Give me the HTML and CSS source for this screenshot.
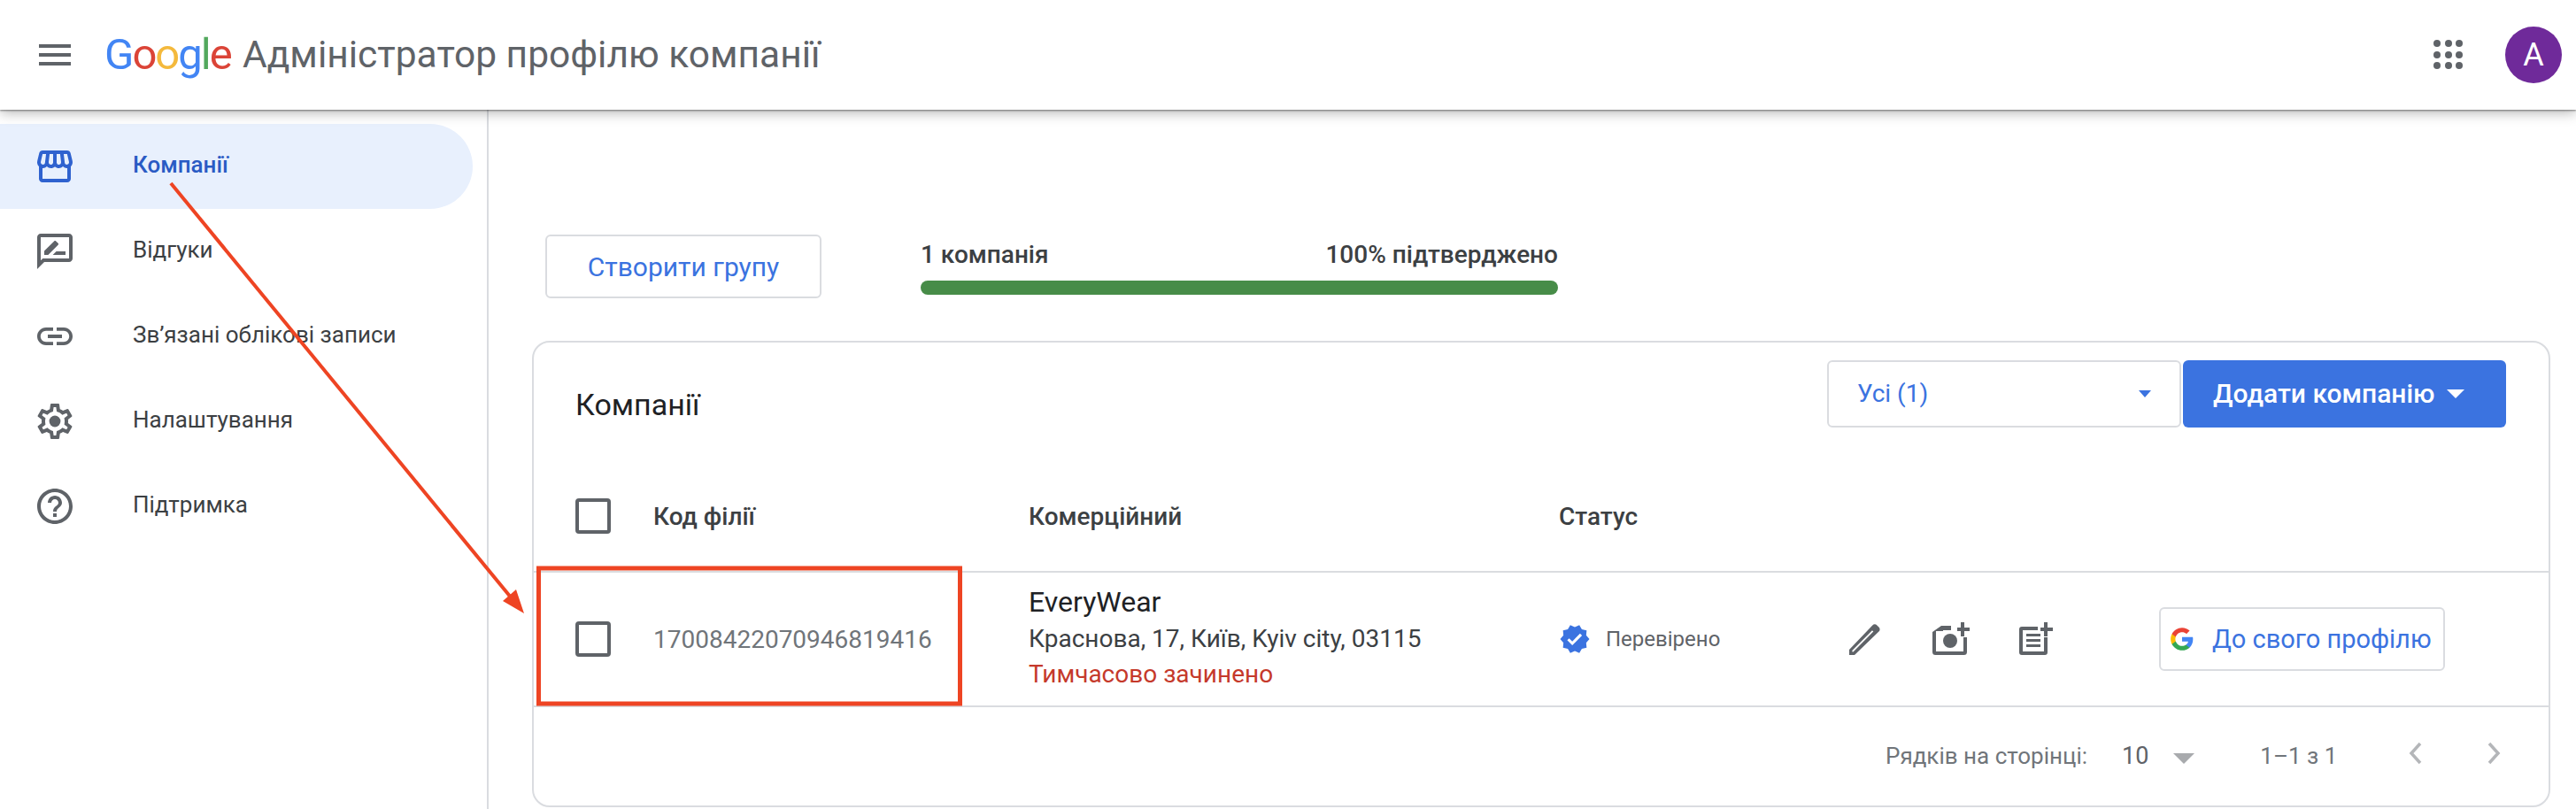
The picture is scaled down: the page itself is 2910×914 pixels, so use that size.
FILE: index.html
```html
<!DOCTYPE html>
<html lang="uk">
<head>
  <meta charset="UTF-8" />
  <title>Адміністратор профілю компанії</title>
  <link rel="stylesheet" href="styles.css">
</head>
<body>
  <header class="topbar">
    <div class="hamburger"><span></span><span></span><span></span></div>
    <div class="logo"><span class="g-blue">G</span><span class="g-red">o</span><span class="g-yellow">o</span><span class="g-blue">g</span><span class="g-green">l</span><span class="g-red">e</span></div>
    <div class="app-title">Адміністратор профілю компанії</div>
    <svg class="apps" width="38" height="38" viewBox="0 0 38 38" fill="#5f6368">
      <circle cx="6" cy="6" r="4"/><circle cx="19" cy="6" r="4"/><circle cx="31" cy="6" r="4"/>
      <circle cx="6" cy="19" r="4"/><circle cx="19" cy="19" r="4"/><circle cx="31" cy="19" r="4"/>
      <circle cx="6" cy="31" r="4"/><circle cx="19" cy="31" r="4"/><circle cx="31" cy="31" r="4"/>
    </svg>
    <div class="avatar">A</div>
  </header>

  <div class="layout">
    <nav class="sidebar">
      <a class="nav-item active">
        <svg class="nav-icon" viewBox="0 0 24 24"><path d="M21.9 8.89l-1.05-4.37c-.22-.9-1-1.52-1.91-1.52H5.05c-.9 0-1.69.63-1.9 1.52L2.1 8.89c-.24 1.02-.02 2.06.62 2.88.08.11.19.19.28.29V19c0 1.1.9 2 2 2h14c1.1 0 2-.9 2-2v-6.94c.09-.09.2-.18.28-.28.64-.82.87-1.87.62-2.89zm-2.99-3.9l1.05 4.37c.1.42.01.84-.25 1.17-.14.18-.44.47-.94.47-.61 0-1.14-.49-1.21-1.14L16.98 5l1.93-.01zM13 5h1.96l.54 4.52c.05.39-.07.78-.33 1.07-.22.26-.54.41-.95.41-.67 0-1.22-.59-1.22-1.31V5zM8.49 9.52L9.04 5H11v4.69c0 .72-.55 1.31-1.29 1.31-.34 0-.65-.15-.89-.41-.25-.29-.37-.68-.33-1.07zm-4.45-.16L5.05 5h1.97l-.58 4.86c-.08.65-.6 1.14-1.21 1.14-.49 0-.8-.29-.93-.47-.27-.32-.36-.75-.26-1.17zM5 19v-6.03c.08.01.15.03.23.03.87 0 1.66-.36 2.24-.95.6.6 1.4.95 2.31.95.87 0 1.65-.36 2.23-.93.59.57 1.39.93 2.29.93.84 0 1.64-.35 2.24-.95.58.59 1.37.95 2.24.95.08 0 .15-.02.23-.03V19H5z"/></svg>
        <span>Компанії</span>
      </a>
      <a class="nav-item">
        <svg class="nav-icon" viewBox="0 0 24 24"><path d="M20 2H4c-1.1 0-2 .9-2 2v18l4-4h14c1.1 0 2-.9 2-2V4c0-1.1-.9-2-2-2zm0 14H5.17L4 17.17V4h16v12z"/><path d="M6 14v-2.2l5.6-5.6c.3-.3.7-.3 1 0l1.2 1.2c.3.3.3.7 0 1L8.2 14H6zM18 14h-7.2l2-2H18v2z"/></svg>
        <span>Відгуки</span>
      </a>
      <a class="nav-item">
        <svg class="nav-icon" viewBox="0 0 24 24"><path d="M3.9 12c0-1.71 1.39-3.1 3.1-3.1h4V7H7c-2.76 0-5 2.24-5 5s2.24 5 5 5h4v-1.9H7c-1.71 0-3.1-1.39-3.1-3.1zM8 13h8v-2H8v2zm9-6h-4v1.9h4c1.71 0 3.1 1.39 3.1 3.1s-1.39 3.1-3.1 3.1h-4V17h4c2.76 0 5-2.24 5-5s-2.24-5-5-5z"/></svg>
        <span>Зв’язані облікові записи</span>
      </a>
      <a class="nav-item">
        <svg class="nav-icon" viewBox="0 0 24 24"><path d="M19.43 12.98c.04-.32.07-.64.07-.98 0-.34-.03-.66-.07-.98l2.11-1.65c.19-.15.24-.42.12-.64l-2-3.46c-.09-.16-.26-.25-.44-.25-.06 0-.12.01-.17.03l-2.49 1c-.52-.4-1.08-.73-1.69-.98l-.38-2.65C14.46 2.18 14.25 2 14 2h-4c-.25 0-.46.18-.49.42l-.38 2.65c-.61.25-1.17.59-1.69.98l-2.49-1c-.06-.02-.12-.03-.18-.03-.17 0-.34.09-.43.25l-2 3.46c-.13.22-.07.49.12.64l2.11 1.65c-.04.32-.07.65-.07.98 0 .33.03.66.07.98l-2.11 1.65c-.19.15-.24.42-.12.64l2 3.46c.09.16.26.25.44.25.06 0 .12-.01.17-.03l2.49-1c.52.4 1.08.73 1.69.98l.38 2.65c.03.24.24.42.49.42h4c.25 0 .46-.18.49-.42l.38-2.65c.61-.25 1.17-.59 1.69-.98l2.49 1c.06.02.12.03.18.03.17 0 .34-.09.43-.25l2-3.46c.12-.22.07-.49-.12-.64l-2.11-1.65zm-1.98-1.71c.04.31.05.52.05.73 0 .21-.02.43-.05.73l-.14 1.13.89.7 1.08.84-.7 1.21-1.27-.51-1.04-.42-.9.68c-.43.32-.84.56-1.25.73l-1.06.43-.16 1.13-.2 1.35h-1.4l-.19-1.35-.16-1.13-1.06-.43c-.43-.18-.83-.41-1.23-.71l-.91-.7-1.06.43-1.27.51-.7-1.21 1.08-.84.89-.7-.14-1.13c-.03-.31-.05-.54-.05-.74s.02-.43.05-.73l.14-1.13-.89-.7-1.08-.84.7-1.21 1.27.51 1.04.42.9-.68c.43-.32.84-.56 1.25-.73l1.06-.43.16-1.13.2-1.35h1.39l.19 1.35.16 1.13 1.06.43c.43.18.83.41 1.23.71l.91.7 1.06-.43 1.27-.51.7 1.21-1.07.85-.89.7.14 1.13z"/><circle cx="12" cy="12" r="3.2"/></svg>
        <span>Налаштування</span>
      </a>
      <a class="nav-item">
        <svg class="nav-icon" viewBox="0 0 24 24"><path d="M11 18h2v-2h-2v2zm1-16C6.48 2 2 6.48 2 12s4.48 10 10 10 10-4.48 10-10S17.52 2 12 2zm0 18c-4.41 0-8-3.59-8-8s3.59-8 8-8 8 3.59 8 8-3.59 8-8 8zm0-14c-2.21 0-4 1.79-4 4h2c0-1.1.9-2 2-2s2 .9 2 2c0 2-3 1.75-3 5h2c0-2.25 3-2.5 3-5 0-2.21-1.79-4-4-4z"/></svg>
        <span>Підтримка</span>
      </a>
    </nav>

    <main class="content">
      <div class="summary">
        <button class="btn-group">Створити групу</button>
        <div class="progress">
          <div class="progress-labels"><span>1 компанія</span><span>100% підтверджено</span></div>
          <div class="progress-bar"></div>
        </div>
      </div>

      <section class="card">
        <div class="card-head">
          <h2>Компанії</h2>
          <div class="card-controls">
            <div class="filter"><span>Усі (1)</span><i class="caret caret-blue"></i></div>
            <button class="btn-add">Додати компанію<i class="caret caret-white"></i></button>
          </div>
        </div>

        <div class="table-row table-header">
          <div><span class="checkbox"></span></div>
          <div>Код філії</div>
          <div>Комерційний</div>
          <div>Статус</div>
        </div>

        <div class="table-row company-row">
          <div><span class="checkbox"></span></div>
          <div class="store-code">17008422070946819416</div>
          <div class="company">
            <div class="company-name">EveryWear</div>
            <div class="company-addr">Краснова, 17, Київ, Kyiv city, 03115</div>
            <div class="company-closed">Тимчасово зачинено</div>
          </div>
          <div class="status">
            <svg width="36" height="36" viewBox="0 0 24 24" fill="#3b73e0"><path d="M23 12l-2.44-2.79.34-3.69-3.61-.82-1.89-3.2L12 2.96 8.6 1.5 6.71 4.69 3.1 5.5l.34 3.7L1 12l2.44 2.79-.34 3.7 3.61.82L8.6 22.5l3.4-1.47 3.4 1.46 1.89-3.19 3.61-.82-.34-3.69L23 12zm-12.91 4.72l-3.8-3.81 1.48-1.48 2.32 2.33 5.85-5.87 1.48 1.48-7.33 7.35z"/></svg>
            <span>Перевірено</span>
          </div>
          <div class="actions">
            <svg class="act act-edit" width="36" height="36" viewBox="0 0 24 24" fill="#5f6368" fill-rule="evenodd"><path d="M0 24v-4L17.5 1.6c1-1 2.4-1 3.4 0l1.4 1.4c1 1 1 2.4 0 3.4L4 24zM2.4 21.6h.6L18.2 6.4l-.9-.9L2.2 20.7z"/></svg>
            <svg class="act act-photo" width="42" height="38" viewBox="0 0 42 38" fill="#5f6368"><path d="M0 11L10 4h11v5H12v1H4v23q0 0 0 0h31V17h4v16.500q0 3.500-3.500 3.500h-32Q0 37 0 33.500z"/><circle cx="20" cy="21" r="8"/><path d="M28 6h4V0h4v6h6v4h-6v6h-4v-6h-4z"/></svg>
            <svg class="act act-note" width="38" height="38" viewBox="0 0 38 38" fill="#5f6368"><path d="M3 5h18v4H4v24h24V17h4v17q0 3-3 3H3q-3 0-3-3V8q0-3 3-3z"/><path d="M8 13h16v3H8zM8 19h16v3H8zM8 25h16v3H8z"/><path d="M24 6h4V0h4v6h6v4h-6v6h-4v-6h-4z"/></svg>
            <button class="btn-profile">
              <svg width="28" height="28" viewBox="0 0 24 24"><path fill="#4285f4" d="M22.56 12.25c0-.78-.07-1.53-.2-2.25H12v4.26h5.92c-.26 1.37-1.04 2.53-2.21 3.31v2.77h3.57c2.08-1.92 3.28-4.74 3.28-8.09z"/><path fill="#34a853" d="M12 23c2.97 0 5.46-.98 7.28-2.66l-3.57-2.77c-.98.66-2.23 1.06-3.71 1.06-2.86 0-5.29-1.93-6.16-4.53H2.18v2.84C3.99 20.53 7.7 23 12 23z"/><path fill="#fbbc05" d="M5.84 14.09c-.22-.66-.35-1.36-.35-2.09s.13-1.43.35-2.09V7.07H2.18C1.43 8.55 1 10.22 1 12s.43 3.45 1.18 4.93l2.85-2.22.81-.62z"/><path fill="#ea4335" d="M12 5.38c1.62 0 3.06.56 4.21 1.64l3.15-3.15C17.45 2.09 14.97 1 12 1 7.7 1 3.99 3.47 2.18 7.07l3.66 2.84c.87-2.6 3.3-4.53 6.16-4.53z"/></svg>
              <span>До свого профілю</span>
            </button>
          </div>
        </div>

        <div class="pager">
          <span class="pager-label">Рядків на сторінці:</span>
          <span class="pager-size">10</span>
          <i class="caret caret-grey"></i>
          <span class="pager-range">1–1 з 1</span>
          <svg class="chev" width="18" height="26" viewBox="0 0 18 26"><path d="M14 2L4 13l10 11" fill="none" stroke="#b4b6b9" stroke-width="3.500"/></svg>
          <svg class="chev chev-next" width="18" height="26" viewBox="0 0 18 26"><path d="M4 2l10 11L4 24" fill="none" stroke="#b4b6b9" stroke-width="3.500"/></svg>
        </div>
      </section>
    </main>
  </div>

  <!-- red annotation drawn over the screenshot -->
  <svg class="annotation" width="2910" height="914" viewBox="0 0 2910 914">
    <line x1="193" y1="207" x2="578" y2="676" stroke="#ee4423" stroke-width="4"/>
    <polygon points="592,693 583,666 568,679" fill="#ee4423"/>
    <rect x="608.500" y="642" width="476" height="153" fill="none" stroke="#ee4423" stroke-width="5"/>
  </svg>
</body>
</html>
```

FILE: styles.css
```css
* {
  box-sizing: border-box;
}
body {
  margin: 0;
  height: 914px;
  overflow: hidden;
  background: #fff;
  color: #202124;
  font-family: Roboto, "Liberation Sans", sans-serif;
}
button {
  font-family: inherit;
  cursor: pointer;
}

/* top bar */
.topbar {
  position: relative;
  z-index: 2;
  display: flex;
  align-items: center;
  height: 124px;
  background: #fff;
  box-shadow: 0 1px 2px rgba(0, 0, 0, 0.45), 0 3px 14px rgba(0, 0, 0, 0.3);
}
.hamburger {
  display: flex;
  flex-direction: column;
  justify-content: space-between;
  width: 36px;
  height: 24px;
  margin-left: 44px;
}
.hamburger span {
  height: 4px;
  background: #5f6368;
}
.logo {
  width: 156px;
  margin-left: 38px;
  font-size: 49px;
  letter-spacing: -2px;
  line-height: 60px;
}
.g-blue { color: #4285f4; }
.g-red { color: #db4437; }
.g-yellow { color: #f4b93c; }
.g-green { color: #52a85d; }
.app-title {
  flex: 1;
  font-size: 42.500px;
  color: #5f6368;
  line-height: 60px;
}
.apps {
  margin-right: 45px;
}
.avatar {
  width: 64px;
  height: 64px;
  margin-right: 16px;
  border-radius: 50%;
  background: #6f2a9a;
  color: #fff;
  font-size: 36px;
  line-height: 64px;
  text-align: center;
}

/* sidebar */
.layout {
  display: flex;
  height: 790px;
}
.sidebar {
  width: 552px;
  flex-shrink: 0;
  padding-top: 16px;
  border-right: 2px solid #dadce0;
}
.nav-item {
  display: flex;
  align-items: center;
  width: 534px;
  height: 96px;
  padding-left: 38px;
  border-radius: 0 48px 48px 0;
  font-size: 26px;
  color: #3c4043;
}
.nav-item span {
  padding-bottom: 4px;
}
.nav-item.active {
  background: #e8f0fd;
  color: #2a5bc4;
  font-weight: 500;
}
.nav-icon {
  width: 48px;
  height: 48px;
  margin-right: 64px;
  fill: #5f6368;
}
.active .nav-icon {
  fill: #2f62cf;
}

/* summary above the card */
.content {
  flex: 1;
  padding: 141px 29px 0 49px;
}
.summary {
  display: flex;
  align-items: flex-start;
  padding-left: 15px;
}
.btn-group {
  width: 312px;
  height: 72px;
  border: 2px solid #dadce0;
  border-radius: 6px;
  background: #fff;
  color: #3b73e0;
  font-size: 30px;
}
.progress {
  width: 720px;
  margin-left: 112px;
}
.progress-labels {
  display: flex;
  justify-content: space-between;
  height: 52px;
  font-size: 28px;
  font-weight: 500;
  line-height: 46px;
  color: #3c4043;
}
.progress-bar {
  height: 16px;
  border-radius: 8px;
  background: #478c48;
}

/* companies card */
.card {
  height: 527px;
  margin-top: 48px;
  border: 2px solid #dadce0;
  border-radius: 20px;
}
.card-head {
  display: flex;
  justify-content: space-between;
  align-items: center;
  height: 120px;
  padding: 0 48px 0 47px;
}
.card-head h2 {
  margin: 20px 0 0;
  font-size: 34px;
  font-weight: 400;
  color: #202124;
}
.card-controls {
  display: flex;
  gap: 2px;
  margin-top: -5px;
}
.filter {
  display: flex;
  align-items: center;
  justify-content: space-between;
  width: 400px;
  height: 76px;
  padding: 0 32px;
  border: 2px solid #dadce0;
  border-radius: 6px;
  color: #3b73e0;
  font-size: 28px;
}
.btn-add {
  display: flex;
  align-items: center;
  justify-content: space-between;
  width: 365px;
  height: 76px;
  padding: 0 47px 0 34px;
  border: 0;
  border-radius: 6px;
  background: #3b73e0;
  color: #fff;
  font-size: 30px;
  font-weight: 500;
  white-space: nowrap;
}
.caret {
  display: block;
  width: 0;
  height: 0;
  border-style: solid;
  border-color: transparent;
}
.caret-blue {
  border-width: 8px 7px 0;
  border-top-color: #3b73e0;
}
.caret-white {
  border-width: 10px 10px 0;
  border-top-color: #fff;
}
.caret-grey {
  border-width: 12px 12px 0;
  border-top-color: #a8aaad;
  margin: 6px 0 0 28px;
}

/* table */
.table-row {
  display: grid;
  grid-template-columns: 88px 424px 599px 328px 1fr;
  align-items: center;
  padding-left: 47px;
}
.table-header {
  height: 138px;
  padding-top: 14px;
  font-size: 28px;
  font-weight: 500;
  color: #3c4043;
}
.checkbox {
  display: block;
  width: 40px;
  height: 40px;
  border: 4px solid #5f6368;
  border-radius: 4px;
}
.company-row {
  height: 154px;
  border-top: 2px solid #dadce0;
  border-bottom: 2px solid #dadce0;
}
.store-code {
  font-size: 28px;
  color: #70757a;
}
.company {
  line-height: 40px;
}
.company-name {
  margin-top: -2px;
  margin-bottom: 2px;
  font-size: 32px;
  color: #202124;
}
.company-addr {
  font-size: 28px;
  color: #3c4043;
}
.company-closed {
  font-size: 28px;
  color: #c5392b;
}
.status {
  display: flex;
  align-items: center;
  gap: 17px;
  font-size: 24px;
  color: #5f6368;
}
.actions {
  display: flex;
  align-items: center;
}
.act-photo {
  margin-left: 58px;
}
.act-note {
  margin-left: 56px;
}
.btn-profile {
  display: flex;
  align-items: center;
  gap: 20px;
  width: 323px;
  height: 72px;
  margin-left: 120px;
  padding: 0 10px;
  border: 2px solid #dadce0;
  border-radius: 6px;
  background: #fff;
  color: #3b73e0;
  font-size: 29px;
  white-space: nowrap;
}

/* pagination */
.pager {
  display: flex;
  align-items: center;
  height: 110px;
  padding-left: 1527px;
  font-size: 26px;
  color: #70757a;
}
.pager-size {
  margin-left: 39px;
  font-size: 27px;
  color: #5f6368;
}
.pager-range {
  margin-left: 74px;
}
.chev {
  margin-left: 80px;
  margin-top: -6px;
}
.chev-next {
  margin-left: 70px;
}

.annotation {
  position: absolute;
  top: 0;
  left: 0;
  z-index: 3;
  pointer-events: none;
}
```
